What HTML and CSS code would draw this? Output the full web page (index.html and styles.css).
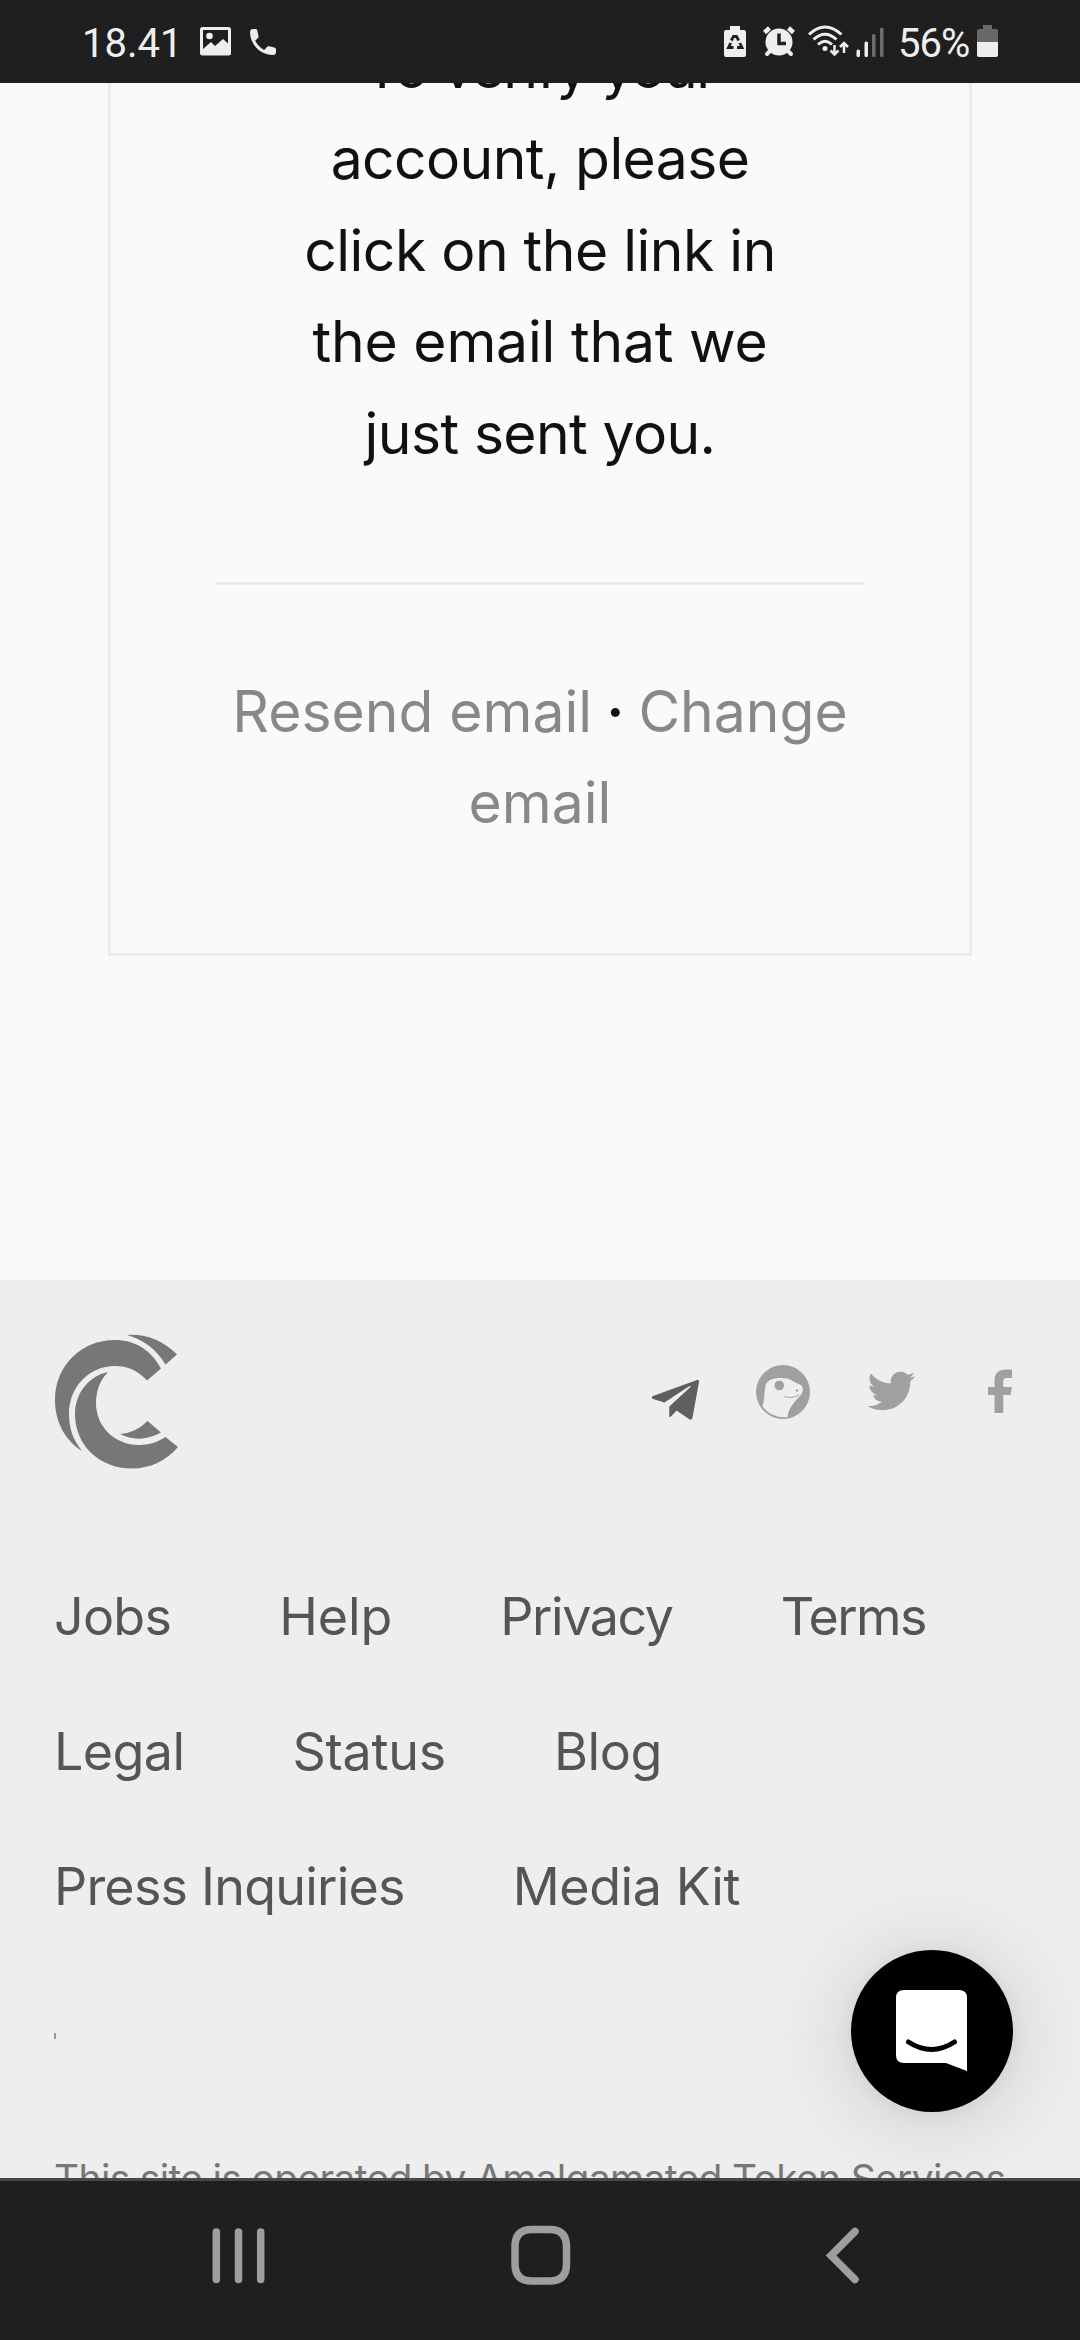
FILE: index.html
```html
<!DOCTYPE html>
<html lang="en">
<head>
<meta charset="utf-8">
<title>Verify your account</title>
<link rel="stylesheet" href="styles.css">
</head>
<body>
<div class="screen">
  <header class="status">
    <span class="clock">18.41</span>
    <svg class="ic-left" width="76" height="32" viewBox="200 26 76 32" fill="#eee">
      <path fill-rule="evenodd" d="M202.500 27h26a2.500 2.500 0 0 1 2.500 2.500v23.500a2.500 2.500 0 0 1-2.500 2.500h-26a2.500 2.500 0 0 1-2.500-2.500v-23.500a2.500 2.500 0 0 1 2.500-2.500zM203 30v19l8-7 4 4 8-7 5 4.500V30z"/>
      <circle cx="209.500" cy="36" r="3.300"/>
      <path d="M250 32c0-2 1-3 3-3h2.500c1 0 1.500.5 1.800 1.500l1.200 5.500c.2 1-.1 1.700-.8 2.300l-2.500 2.500c2 4 5 7 9 9.300l2.800-3.100c.6-.6 1.300-.9 2.200-.7l5 1.200c1 .2 1.800.9 1.800 2v2.500c0 2-1 3-3 3C260 55 250 44 250 32z"/>
    </svg>
    <svg class="ic-right" width="162" height="34" viewBox="723 24 162 34" fill="#eee">
      <path d="M730 26h10v4h4q2 0 2 2v23q0 2-2 2h-18q-2 0-2-2v-23q0-2 2-2h4z"/>
      <g fill="none" stroke="#1f1f1f" stroke-width="2.800"><path d="M731.300 40.500l2.200-4h3l2.200 4M739.800 43l2.200 4.500h-5M733.500 47.500h-5l2.200-4.500"/></g>
      <circle cx="779" cy="42" r="13.500"/>
      <path d="M764.500 32.500l5-4.500M793.500 32.500l-5-4.500" stroke="#eee" stroke-width="4.500"/>
      <path d="M770 51l-3 3M788 51l3 3" stroke="#eee" stroke-width="4" stroke-linecap="round"/>
      <path d="M779 33.500v10h7" fill="none" stroke="#1f1f1f" stroke-width="3.500"/>
      <g fill="none" stroke="#eee" stroke-width="3"><path d="M809 34.500q16-15 32.500 0M813.500 39.500q11.500-10.500 23 0M818 44.500q7-6.500 14 0"/></g>
      <circle cx="825" cy="48.500" r="2.500"/>
      <path d="M834.500 45v9M830.500 50.500l4 4 4-4M844 53V43.500M840 47l4-4 4 4" fill="none" stroke="#eee" stroke-width="2.500"/>
      <rect x="856.500" y="49.500" width="3.500" height="7.500" rx="1.500"/><rect x="864.500" y="41.500" width="3.500" height="15.500" rx="1.500"/>
      <g fill="#6d6d6d"><rect x="872" y="34" width="3.500" height="23" rx="1.500"/><rect x="880" y="27.500" width="3.500" height="29.500" rx="1.500"/></g>
    </svg>
    <span class="percent">56%</span>
    <svg class="ic-batt" width="21" height="32" viewBox="0 0 21 32"><path d="M6 0h9v4h4q2 0 2 2v12H0V6q0-2 2-2h4z" fill="#686868"/><path d="M0 17h21v13q0 2-2 2H2q-2 0-2-2z" fill="#eee"/></svg>
  </header>

  <main class="page">
    <section class="card">
      <p class="message"><span class="line-1">To verify your</span><br><span class="line-2">account, please</span><br><span class="line-3">click on the link in</span><br><span class="line-4">the email that we</span><br><span class="line-5">just sent you.</span></p>
      <p class="actions"><a>Resend email</a> <span class="dot">·</span> <a>Change<br>email</a></p>
    </section>
  </main>

  <footer class="footer">
    <div class="brand">
      <svg class="logo" width="124" height="136" viewBox="0 0 124 136" fill="#777">
        <path d="M72 1Q100-1 122 20.500L110.500 30.500Q97 8 72 1Z"/>
        <path d="M106 34.500L92 46.500C82 36 72 32 60 32C34 32 14 53 14 80C14 94 18 106 27 117C11 107 0 89 0 66C0 32 26 6 60 6C80 6 96 16 106 34.500Z"/>
        <path d="M53 38C45 46 41 57 41 69C41 93 60 111 84 111C94 111 103 108 110.500 103L123 113C111 127 95 134.500 77 134.500C44 134.500 20 111 20 80C20 59 34 42 53 38Z"/>
        <path d="M65 100Q81 99 92.500 87L106 98.500Q85 110 65 100Z"/>
      </svg>
      <svg class="social" width="362" height="56" viewBox="651 1364 362 56" fill="#a0a0a0">
        <path fill="#5f5f5f" d="M697 1380C698.500 1379.500 699.300 1380.500 699 1382L692.500 1417.500C692 1420 690.500 1420 689 1419L676.500 1410.500L671 1416.500C670 1417.500 669.300 1417 669.300 1416V1406.500L691 1386.500C690 1386 689 1386.500 688 1387L664.500 1402.500L653 1399C651 1398 651.500 1397 653 1396Z"/>
        <circle cx="783" cy="1392" r="27"/>
        <path fill="#eee" d="M762.500 1406.500C765 1397 764 1390 766 1384C769 1378 778 1377 788 1378.500C793 1381 796 1383 801 1385C804 1388 803 1392 801 1395C795 1401 788 1409 787.500 1417C777 1418.500 767 1413 762.500 1406.500Z"/>
        <circle cx="779.300" cy="1385.500" r="4.800"/><circle cx="797" cy="1390.500" r="1.200"/>
        <path d="M784.500 1396.500Q792 1399 799 1395" fill="none" stroke="#a0a0a0"/>
        <path transform="translate(867.600 1367.200) scale(1.980)" d="M23.950 4.570a10 10 0 0 1-2.820.77 4.960 4.960 0 0 0 2.160-2.720c-.95.550-2 .95-3.130 1.180a4.920 4.920 0 0 0-8.380 4.480C7.690 8.090 4.070 6.130 1.640 3.160a4.820 4.820 0 0 0-.67 2.480c0 1.710.87 3.210 2.190 4.100a4.900 4.900 0 0 1-2.230-.62v.06a4.920 4.920 0 0 0 3.950 4.830 5 5 0 0 1-2.210.08 4.940 4.940 0 0 0 4.600 3.420A9.870 9.870 0 0 1 0 19.540a13.990 13.990 0 0 0 7.550 2.210c9.050 0 14-7.500 14-13.980 0-.21 0-.42-.02-.63a9.940 9.940 0 0 0 2.460-2.550z"/>
        <path d="M1012 1369.500V1378H1007C1004 1378 1003.300 1379.500 1003.300 1382V1387H1012L1010.500 1395H1003.300V1413H994.500V1395H988V1387H994.500V1381C994.500 1373 999 1369.500 1005.500 1369.500Z"/>
      </svg>
    </div>
    <nav class="links">
      <div class="links-row"><a class="jobs">Jobs</a><a class="help">Help</a><a class="privacy">Privacy</a><a class="terms">Terms</a></div>
      <div class="links-row"><a class="legal">Legal</a><a class="state">Status</a><a class="blog">Blog</a></div>
      <div class="links-row"><a class="press">Press Inquiries</a><a class="media">Media Kit</a></div>
    </nav>
    <div class="rule"></div>
    <p class="legal-note">This site is operated by Amalgamated Token Services</p>
  </footer>

  <button class="chat" aria-label="Open chat">
    <svg width="72" height="82" viewBox="0 0 72 82"><path d="M8 0H63Q71 0 71 8V81L50 73H8Q0 73 0 65V8Q0 0 8 0Z" fill="#fff"/><path d="M12.500 52Q35.500 67 58.500 52" fill="none" stroke="#000" stroke-width="5" stroke-linecap="round"/></svg>
  </button>

  <div class="navbar">
    <svg width="648" height="60" viewBox="212 2225 648 60" fill="none" stroke="#9e9e9e" stroke-width="7.500" stroke-linecap="round">
      <path d="M216.300 2232v47.500M238.500 2232v47.500M260.700 2232v47.500"/>
      <path d="M532 2229.500h17.500q17 0 17 17v17.500q0 17-17 17h-17.500q-17 0-17-17v-17.500q0-17 17-17z"/>
      <path d="M855 2231.500L831 2255.500L855 2279.500"/>
    </svg>
  </div>
</div>
</body>
</html>
```
FILE: styles.css
```css
* { box-sizing: border-box; }
body { margin: 0; background: #fafafa; font-family: Inter, "Liberation Sans", sans-serif; }
p { margin: 0; }
.screen {
  position: relative;
  display: flex;
  flex-direction: column;
  width: 1080px;
  height: 2340px;
  overflow: hidden;
}

.status {
  display: flex;
  align-items: flex-start;
  flex: none;
  height: 83px;
  padding: 25px 82px 0 82px;
  background: #1f1f1f;
  color: #eee;
  font: 40px/34px Roboto, sans-serif;
  z-index: 1;
}
.clock { width: 118px; padding-top: 2px; }
.ic-left { margin-top: 1px; }
.ic-right { margin-left: auto; margin-top: -1px; }
.percent { width: 92px; padding: 2px 0 0 13px; letter-spacing: -1px; white-space: nowrap; }
.ic-batt { flex: none; }

.page { flex: none; height: 1197px; padding: 0 108px; }
.card {
  display: flow-root;
  height: 873px;
  padding: 0 105px;
  border: 3px solid #e9edf2;
  border-top: 0;
  color: #111;
  font-size: 57px;
  line-height: 91.400px;
  text-align: center;
}
/* the message is scrolled partly under the status bar */
.message { height: 563px; margin-top: -61px; border-bottom: 3px solid #e9edf2; }
.line-1 { letter-spacing: -1.400px; }
.line-2 { letter-spacing: -.600px; }
.line-3 { letter-spacing: -.500px; }
.line-4 { letter-spacing: -.200px; }
.line-5 { letter-spacing: -.600px; }
.actions { padding-top: 81px; }
.actions a { color: #888; }
.dot { margin: 0 -2px; font-weight: 600; }

.footer { flex: none; height: 898px; padding: 54px; background: #eee; }
.brand { display: flex; justify-content: space-between; height: 136px; padding: 0 13px 0 1px; }
.social { margin-top: 30px; }
.links { margin-top: 79px; color: #555; font-size: 52px; line-height: 135px; }
.links-row { display: flex; gap: 108px; }
.jobs { letter-spacing: -.750px; }
.help { letter-spacing: -.100px; }
.privacy { letter-spacing: -1.400px; }
.terms { letter-spacing: -1.600px; }
.legal { letter-spacing: -.600px; }
.state { letter-spacing: -.250px; }
.blog { letter-spacing: -.400px; }
.press { letter-spacing: -.780px; }
.media { letter-spacing: -.400px; }
.rule { height: 3px; margin-top: 79px; background: #ebecf2; }
.rule::before { content: ""; display: block; width: 2px; height: 6px; background: #999; }
.legal-note { margin-top: 119px; color: #777; font-size: 39px; line-height: 48px; letter-spacing: -.680px; white-space: nowrap; }

.chat {
  position: absolute;
  left: 851px;
  top: 1950px;
  width: 162px;
  height: 162px;
  display: flex;
  justify-content: center;
  padding: 40px 0 0 0;
  border: 0;
  border-radius: 50%;
  background: #000;
  box-shadow: 0 3px 18px rgba(0, 0, 0, .06), 0 6px 96px rgba(0, 0, 0, .16);
}

.navbar {
  flex: none;
  height: 162px;
  padding: 44px 0 0 212px;
  border-top: 3px solid #454a48;
  background: #1f1f1f;
  z-index: 1;
}
```
